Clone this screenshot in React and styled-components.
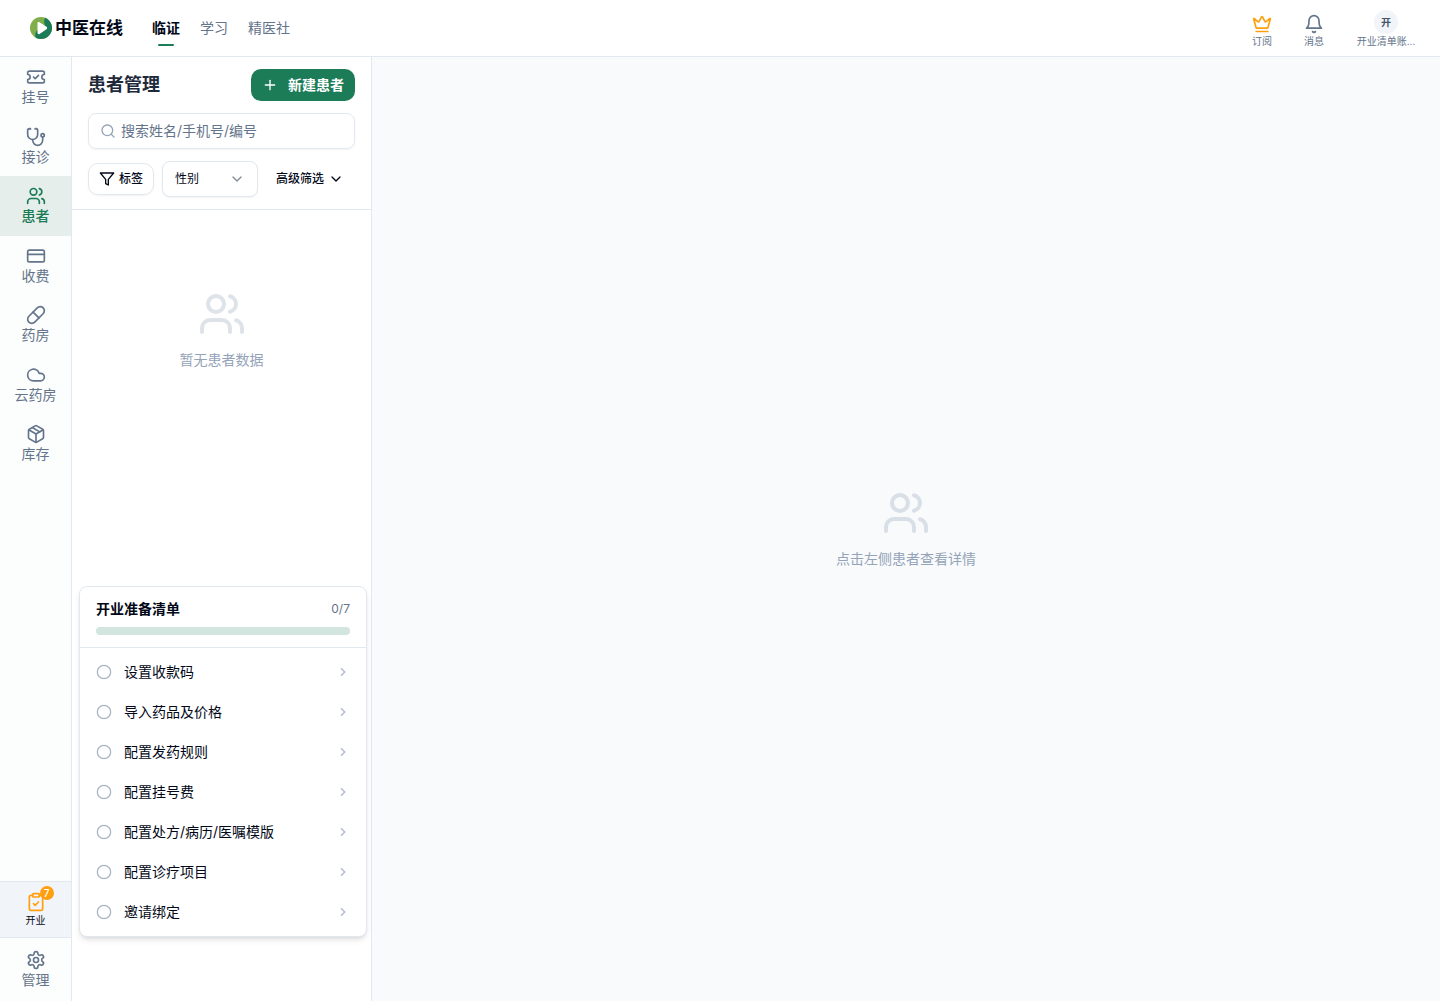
import React, { useState } from 'react';
import styled, { createGlobalStyle, css } from 'styled-components';
import {
    ChevronDown,
    ChevronRight,
    Circle,
    ClipboardCheck,
    Cloud,
    CreditCard,
    Crown,
    Package,
    Pill,
    Plus,
    Search,
    TicketCheck,
    Users,
} from 'lucide-react';

const colors = {
    primary: '#1c7c58',
    primarySoft: '#e5eeeb',
    track: '#d2e5de',
    orange: '#ff9f0f',
    text: '#020817',
    title: '#1e293b',
    muted: '#64748b',
    faint: '#94a3b8',
    border: '#e2e8f0',
    surface: '#f8fafc',
    sidebar: '#fcfefd',
    chip: '#f1f5f9',
};

// Icons that are drawn by hand, on the same 24px grid as lucide
function LineIcon({ size = 20, children }) {
    return (
        <svg width={size} height={size} viewBox="0 0 24 24" fill="none" stroke="currentColor" strokeWidth="2" strokeLinecap="round" strokeLinejoin="round" aria-hidden="true">
            {children}
        </svg>
    );
}

function Stethoscope({ size }) {
    return (
        <LineIcon size={size}>
            <path d="M4.8 2.3A.3.3 0 1 0 5 2H4a2 2 0 0 0-2 2v5a6 6 0 0 0 6 6 6 6 0 0 0 6-6V4a2 2 0 0 0-2-2h-1a.2.2 0 1 0 .3.3" />
            <path d="M8 15v1a6 6 0 0 0 6 6 6 6 0 0 0 6-6v-4" />
            <circle cx="20" cy="10" r="2" />
        </LineIcon>
    );
}

function Bell({ size }) {
    return (
        <LineIcon size={size}>
            <path d="M6 8a6 6 0 0 1 12 0c0 7 3 9 3 9H3s3-2 3-9" />
            <path d="M10.3 21a1.94 1.94 0 0 0 3.4 0" />
        </LineIcon>
    );
}

function Gear({ size }) {
    return (
        <LineIcon size={size}>
            <path d="M12.22 2h-.44a2 2 0 0 0-2 2v.18a2 2 0 0 1-1 1.73l-.43.25a2 2 0 0 1-2 0l-.15-.08a2 2 0 0 0-2.73.73l-.22.38a2 2 0 0 0 .73 2.73l.15.1a2 2 0 0 1 1 1.72v.51a2 2 0 0 1-1 1.74l-.15.09a2 2 0 0 0-.73 2.73l.22.38a2 2 0 0 0 2.73.73l.15-.08a2 2 0 0 1 2 0l.43.25a2 2 0 0 1 1 1.73V20a2 2 0 0 0 2 2h.44a2 2 0 0 0 2-2v-.18a2 2 0 0 1 1-1.73l.43-.25a2 2 0 0 1 2 0l.15.08a2 2 0 0 0 2.73-.73l.22-.39a2 2 0 0 0-.73-2.73l-.15-.08a2 2 0 0 1-1-1.74v-.5a2 2 0 0 1 1-1.74l.15-.09a2 2 0 0 0 .73-2.73l-.22-.38a2 2 0 0 0-2.73-.73l-.15.08a2 2 0 0 1-2 0l-.43-.25a2 2 0 0 1-1-1.73V4a2 2 0 0 0-2-2z" />
            <circle cx="12" cy="12" r="3" />
        </LineIcon>
    );
}

function FilterIcon() {
    return (
        <LineIcon size={16}>
            <polygon points="22 3 2 3 10 12.46 10 19 14 21 14 12.46 22 3" />
        </LineIcon>
    );
}

function Logo() {
    return (
        <svg width="22" height="22" viewBox="0 0 22 22" aria-hidden="true">
            <clipPath id="logo-disc">
                <circle cx="11" cy="11" r="11" />
            </clipPath>
            <g clipPath="url(#logo-disc)">
                <rect width="22" height="22" fill="#7fae4a" />
                <path d="M15.5 0C14 3 13.5 5 15 8L8 13C5.5 14.5 4.5 17 6 22H22V0Z" fill="#1b7b58" />
            </g>
            <path d="M7.5 6.300c0-1.200 1-1.700 2-1.100l7 4.600c.9.600.9 1.800 0 2.400l-7 4.700c-1 .6-2 .1-2-1.100Z" fill="#fff" />
        </svg>
    );
}

const topTabs = ['临证', '学习', '精医社'];

const sideItems = [
    { label: '挂号', icon: TicketCheck },
    { label: '接诊', icon: Stethoscope },
    { label: '患者', icon: Users },
    { label: '收费', icon: CreditCard },
    { label: '药房', icon: Pill },
    { label: '云药房', icon: Cloud },
    { label: '库存', icon: Package },
];

const checklist = [
    '设置收款码',
    '导入药品及价格',
    '配置发药规则',
    '配置挂号费',
    '配置处方/病历/医嘱模版',
    '配置诊疗项目',
    '邀请绑定',
];

function Checklist() {
    return (
        <ChecklistCard>
            <ChecklistHead>
                <ChecklistTitle>
                    <h2>开业准备清单</h2>
                    <span>0/{checklist.length}</span>
                </ChecklistTitle>
                <ProgressTrack role="progressbar" aria-label="开业准备清单" aria-valuenow={0} aria-valuemax={checklist.length} />
            </ChecklistHead>
            <ChecklistItems>
                {checklist.map((item) => (
                    <li key={item}>
                        <ChecklistButton type="button">
                            <Circle size={16} />
                            <span>{item}</span>
                            <ChevronRight size={14} />
                        </ChecklistButton>
                    </li>
                ))}
            </ChecklistItems>
        </ChecklistCard>
    );
}

function App() {
    const [tab, setTab] = useState('临证');
    const [section, setSection] = useState('患者');
    const [keyword, setKeyword] = useState('');
    const [listOpen, setListOpen] = useState(true);

    return (
        <Page>
            <GlobalStyle />
            <TopBar>
                <Brand href="#">
                    <Logo />
                    中医在线
                </Brand>
                <TopTabs>
                    {topTabs.map((name) => (
                        <TopTab key={name} type="button" $active={name === tab} onClick={() => setTab(name)}>
                            {name}
                        </TopTab>
                    ))}
                </TopTabs>
                <TopActions>
                    <TopAction type="button">
                        <Crown size={20} color={colors.orange} />
                        订阅
                    </TopAction>
                    <TopAction type="button">
                        <Bell size={20} />
                        消息
                    </TopAction>
                    <AccountButton type="button">
                        <Avatar>开</Avatar>
                        开业清单账...
                    </AccountButton>
                </TopActions>
            </TopBar>

            <Body>
                <Sidebar>
                    <SideNav>
                        {sideItems.map(({ label, icon: Icon }) => (
                            <SideItem key={label} type="button" $active={label === section} onClick={() => setSection(label)}>
                                <Icon size={20} />
                                {label}
                            </SideItem>
                        ))}
                    </SideNav>
                    <SetupWrap>
                        <SetupButton type="button" onClick={() => setListOpen(!listOpen)}>
                            <SetupIcon>
                                <ClipboardCheck size={20} />
                                <Badge>7</Badge>
                            </SetupIcon>
                            开业
                        </SetupButton>
                        {listOpen && <Checklist />}
                    </SetupWrap>
                    <SideFooter>
                        <SideItem type="button">
                            <Gear size={20} />
                            管理
                        </SideItem>
                    </SideFooter>
                </Sidebar>

                <PatientPanel>
                    <PanelHead>
                        <TitleRow>
                            <h1>患者管理</h1>
                            <PrimaryButton type="button">
                                <Plus size={16} />
                                新建患者
                            </PrimaryButton>
                        </TitleRow>
                        <SearchBox>
                            <Search size={16} />
                            <input
                                aria-label="搜索患者"
                                placeholder="搜索姓名/手机号/编号"
                                value={keyword}
                                onChange={(e) => setKeyword(e.target.value)}
                            />
                        </SearchBox>
                        <FilterRow>
                            <FilterButton type="button" $outlined>
                                <FilterIcon />
                                标签
                            </FilterButton>
                            <SelectWrap>
                                <select aria-label="性别" defaultValue="">
                                    <option value="">性别</option>
                                    <option value="m">男</option>
                                    <option value="f">女</option>
                                </select>
                                <ChevronDown size={16} />
                            </SelectWrap>
                            <FilterButton type="button">
                                高级筛选
                                <ChevronDown size={16} />
                            </FilterButton>
                        </FilterRow>
                    </PanelHead>
                    <PanelEmpty>
                        <Users size={48} />
                        <p>暂无患者数据</p>
                    </PanelEmpty>
                </PatientPanel>

                <Detail>
                    <Users size={48} />
                    <p>点击左侧患者查看详情</p>
                </Detail>
            </Body>
        </Page>
    );
}

const GlobalStyle = createGlobalStyle`
    *, *::before, *::after {
        box-sizing: border-box;
    }

    body {
        margin: 0;
        color: ${colors.text};
        font-family: Inter, 'Noto Sans CJK SC', sans-serif;
        font-size: 14px;
        line-height: 20px;
    }

    h1, h2, p, ul {
        margin: 0;
        padding: 0;
    }

    button, input, select {
        font: inherit;
        color: inherit;
    }

    button {
        padding: 0;
        border: 0;
        background: none;
        cursor: pointer;
    }

    svg {
        display: block;
        flex-shrink: 0;
    }
`;

const Page = styled.div`
    display: flex;
    flex-direction: column;
    min-height: 100vh;
`;

const TopBar = styled.header`
    display: flex;
    align-items: center;
    height: 57px;
    padding: 0 24px 0 30px;
    border-bottom: 1px solid ${colors.border};
    background: #fff;
`;

const Brand = styled.a`
    display: flex;
    align-items: center;
    gap: 3px;
    color: ${colors.text};
    font-size: 17px;
    font-weight: 700;
    text-decoration: none;
`;

const TopTabs = styled.nav`
    display: flex;
    gap: 20px;
    margin-left: 29px;
`;

const TopTab = styled.button`
    display: flex;
    flex-direction: column;
    align-items: center;
    gap: 6px;
    padding-top: 8px;
    color: ${(props) => (props.$active ? colors.text : colors.muted)};
    font-weight: ${(props) => (props.$active ? 700 : 400)};

    &::after {
        content: '';
        width: 16px;
        height: 2px;
        border-radius: 1px;
        background: ${(props) => (props.$active ? colors.primary : 'transparent')};
    }
`;

const TopActions = styled.div`
    display: flex;
    align-items: flex-end;
    gap: 32px;
    margin-left: auto;
    padding-top: 1px;
`;

const TopAction = styled.button`
    display: flex;
    flex-direction: column;
    align-items: center;
    gap: 1px;
    color: ${colors.muted};
    font-size: 10px;
    line-height: 12px;
`;

const AccountButton = styled(TopAction)`
    width: 60px;
    white-space: nowrap;
`;

const Avatar = styled.span`
    display: grid;
    place-items: center;
    width: 24px;
    height: 24px;
    border-radius: 50%;
    background: ${colors.chip};
    color: #475569;
    font-weight: 700;
`;

const Body = styled.div`
    display: flex;
    flex: 1;
`;

const Sidebar = styled.aside`
    display: flex;
    flex-direction: column;
    width: 72px;
    flex-shrink: 0;
    border-right: 1px solid ${colors.border};
    background: ${colors.sidebar};
`;

const SideNav = styled.nav`
    display: flex;
    flex-direction: column;
    flex: 1;
`;

const SideItem = styled.button`
    display: flex;
    flex-direction: column;
    align-items: center;
    gap: 1px;
    width: 100%;
    padding: 10px 0 11px;
    color: ${colors.muted};
    line-height: 1.25;

    ${(props) => props.$active && css`
        background: ${colors.primarySoft};
        color: ${colors.primary};
        font-weight: 500;
    `}
`;

const SetupWrap = styled.div`
    position: relative;
`;

const SetupButton = styled.button`
    display: flex;
    flex-direction: column;
    align-items: center;
    gap: 2px;
    width: 100%;
    padding: 10px 0;
    border-top: 1px solid ${colors.border};
    border-bottom: 1px solid ${colors.border};
    background: ${colors.chip};
    font-size: 10px;
    line-height: 13px;
`;

const SetupIcon = styled.span`
    position: relative;
    color: ${colors.orange};
`;

const Badge = styled.span`
    position: absolute;
    top: -6px;
    right: -8px;
    display: grid;
    place-items: center;
    width: 14px;
    height: 14px;
    border-radius: 50%;
    background: ${colors.orange};
    color: #fff;
    font-size: 10px;
    font-weight: 500;
    line-height: 14px;
`;

const SideFooter = styled.div`
    padding: 2px 0;
`;

const ChecklistCard = styled.section`
    position: absolute;
    left: calc(100% + 8px);
    bottom: 1px;
    z-index: 10;
    width: 288px;
    border: 1px solid ${colors.border};
    border-radius: 8px;
    background: #fff;
    box-shadow: 0 4px 6px -1px rgba(0, 0, 0, 0.1), 0 2px 4px -2px rgba(0, 0, 0, 0.1);
`;

const ChecklistHead = styled.div`
    padding: 12px 16px;
    border-bottom: 1px solid ${colors.border};
`;

const ChecklistTitle = styled.div`
    display: flex;
    align-items: center;
    justify-content: space-between;
    margin-bottom: 8px;

    h2 {
        font-size: 14px;
        font-weight: 600;
    }

    span {
        color: ${colors.muted};
        font-size: 12px;
    }
`;

const ProgressTrack = styled.div`
    height: 8px;
    border-radius: 4px;
    background: ${colors.track};
`;

const ChecklistItems = styled.ul`
    padding: 4px 0;
    list-style: none;
`;

const ChecklistButton = styled.button`
    display: flex;
    align-items: center;
    gap: 12px;
    width: 100%;
    padding: 10px 16px;
    text-align: left;

    span {
        flex: 1;
    }

    svg {
        color: #aab6c6;
    }
`;

const PatientPanel = styled.section`
    width: 300px;
    flex-shrink: 0;
    border-right: 1px solid ${colors.border};
    background: #fff;
`;

const PanelHead = styled.div`
    display: flex;
    flex-direction: column;
    gap: 12px;
    padding: 12px 16px;
    border-bottom: 1px solid ${colors.border};
`;

const TitleRow = styled.div`
    display: flex;
    align-items: center;
    justify-content: space-between;

    h1 {
        color: ${colors.title};
        font-size: 18px;
        font-weight: 700;
    }
`;

const PrimaryButton = styled.button`
    display: flex;
    align-items: center;
    gap: 10px;
    height: 32px;
    padding: 0 11px;
    border-radius: 10px;
    background: ${colors.primary};
    color: #fff;
    font-weight: 700;
`;

const SearchBox = styled.label`
    display: flex;
    align-items: center;
    gap: 5px;
    height: 36px;
    padding: 0 11px;
    border: 1px solid ${colors.border};
    border-radius: 8px;
    box-shadow: 0 1px 2px rgba(0, 0, 0, 0.05);

    svg {
        color: ${colors.faint};
    }

    input {
        flex: 1;
        min-width: 0;
        padding: 0;
        border: 0;
        outline: 0;
        background: none;
    }

    input::placeholder {
        color: ${colors.muted};
        opacity: 1;
    }
`;

const FilterRow = styled.div`
    display: flex;
    align-items: center;
    gap: 8px;
`;

const FilterButton = styled.button`
    display: flex;
    align-items: center;
    gap: 4px;
    height: 32px;
    padding: 0 10px;
    border-radius: 10px;
    font-size: 12px;
    font-weight: 500;

    ${(props) => props.$outlined && css`
        border: 1px solid ${colors.border};
        box-shadow: 0 1px 2px rgba(0, 0, 0, 0.05);
    `}
`;

const SelectWrap = styled.div`
    display: grid;
    align-items: center;
    width: 96px;

    select,
    svg {
        grid-area: 1 / 1;
    }

    select {
        width: 100%;
        height: 36px;
        padding: 0 12px;
        border: 1px solid ${colors.border};
        border-radius: 8px;
        background: #fff;
        box-shadow: 0 1px 2px rgba(0, 0, 0, 0.05);
        font-size: 12px;
        appearance: none;
    }

    svg {
        justify-self: end;
        margin-right: 13px;
        color: #858b96;
        pointer-events: none;
    }
`;

const emptyState = css`
    display: flex;
    flex-direction: column;
    align-items: center;
    gap: 12px;
    color: ${colors.faint};

    svg {
        opacity: 0.3;
    }
`;

const PanelEmpty = styled.div`
    ${emptyState}
    padding-top: 80px;
`;

const Detail = styled.main`
    ${emptyState}
    flex: 1;
    justify-content: center;
    background: ${colors.surface};
`;

export default App;
